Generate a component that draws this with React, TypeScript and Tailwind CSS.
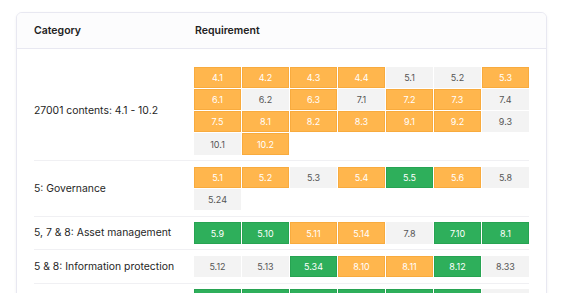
import React from 'react';

type Status = 'done' | 'partial' | 'none';

interface Req {
  id: string;
  status: Status;
}

interface CategoryRow {
  name: string;
  reqs: Req[];
}

const o = (id: string): Req => ({ id, status: 'partial' });
const g = (id: string): Req => ({ id, status: 'done' });
const n = (id: string): Req => ({ id, status: 'none' });

const rows: CategoryRow[] = [
  {
    name: '27001 contents: 4.1 - 10.2',
    reqs: [
      o('4.1'), o('4.2'), o('4.3'), o('4.4'), n('5.1'), n('5.2'), o('5.3'),
      o('6.1'), n('6.2'), o('6.3'), n('7.1'), o('7.2'), o('7.3'), n('7.4'),
      o('7.5'), o('8.1'), o('8.2'), o('8.3'), o('9.1'), o('9.2'), n('9.3'),
      n('10.1'), o('10.2'),
    ],
  },
  {
    name: '5: Governance',
    reqs: [o('5.1'), o('5.2'), n('5.3'), o('5.4'), g('5.5'), o('5.6'), n('5.8'), n('5.24')],
  },
  {
    name: '5, 7 & 8: Asset management',
    reqs: [g('5.9'), g('5.10'), o('5.11'), o('5.14'), n('7.8'), g('7.10'), g('8.1')],
  },
  {
    name: '5 & 8: Information protection',
    reqs: [n('5.12'), n('5.13'), g('5.34'), o('8.10'), o('8.11'), g('8.12'), n('8.33')],
  },
  {
    name: '5 & 8: Identity and access',
    reqs: [g('5.15'), g('5.16'), g('5.17'), g('5.18'), g('8.2'), g('8.3'), n('8.5')],
  },
];

const cellStyles: Record<Status, string> = {
  done: 'bg-[#2eaf5b] border-[#27a352] text-white',
  partial: 'bg-[#ffb64d] border-[#f8ab3e] text-white',
  none: 'bg-[#f3f3f3] border-[#f3f3f3] text-[#555555]',
};

function ReqCell({ req }: { req: Req }) {
  return (
    <div
      className={`h-[21.33px] flex items-center justify-center border text-[9px] leading-none ${cellStyles[req.status]}`}
    >
      {req.id}
    </div>
  );
}

export default function App() {
  return (
    <div
      className="min-h-screen bg-white pt-[12px] pl-[16px]"
      style={{ fontFamily: 'Inter, "Noto Sans", sans-serif' }}
    >
      <div className="w-[531px] rounded-md border border-[#e8e8f1] bg-white shadow-[0_1px_3px_rgba(30,30,80,0.06)] overflow-hidden">
        {/* header */}
        <div className="flex items-center h-[36px] pt-[1px] px-[17px] bg-[#fcfcfd] border-b border-[#e8e8f1] text-[10.5px] font-semibold text-[#222]">
          <div className="w-[161px]">Category</div>
          <div>Requirement</div>
        </div>

        <div className="pt-[12px] px-[17px]">
          {rows.map((row) => (
            <div
              key={row.name}
              className="flex items-center py-[5.5px] border-b border-[#f0f0f3]"
            >
              <div className="w-[161px] text-[10.4px] text-[#1f1f1f]">{row.name}</div>
              <div className="grid grid-cols-[repeat(7,47px)] gap-[1px]">
                {row.reqs.map((r, i) => (
                  <ReqCell key={i} req={r} />
                ))}
              </div>
            </div>
          ))}
        </div>
      </div>
    </div>
  );
}
